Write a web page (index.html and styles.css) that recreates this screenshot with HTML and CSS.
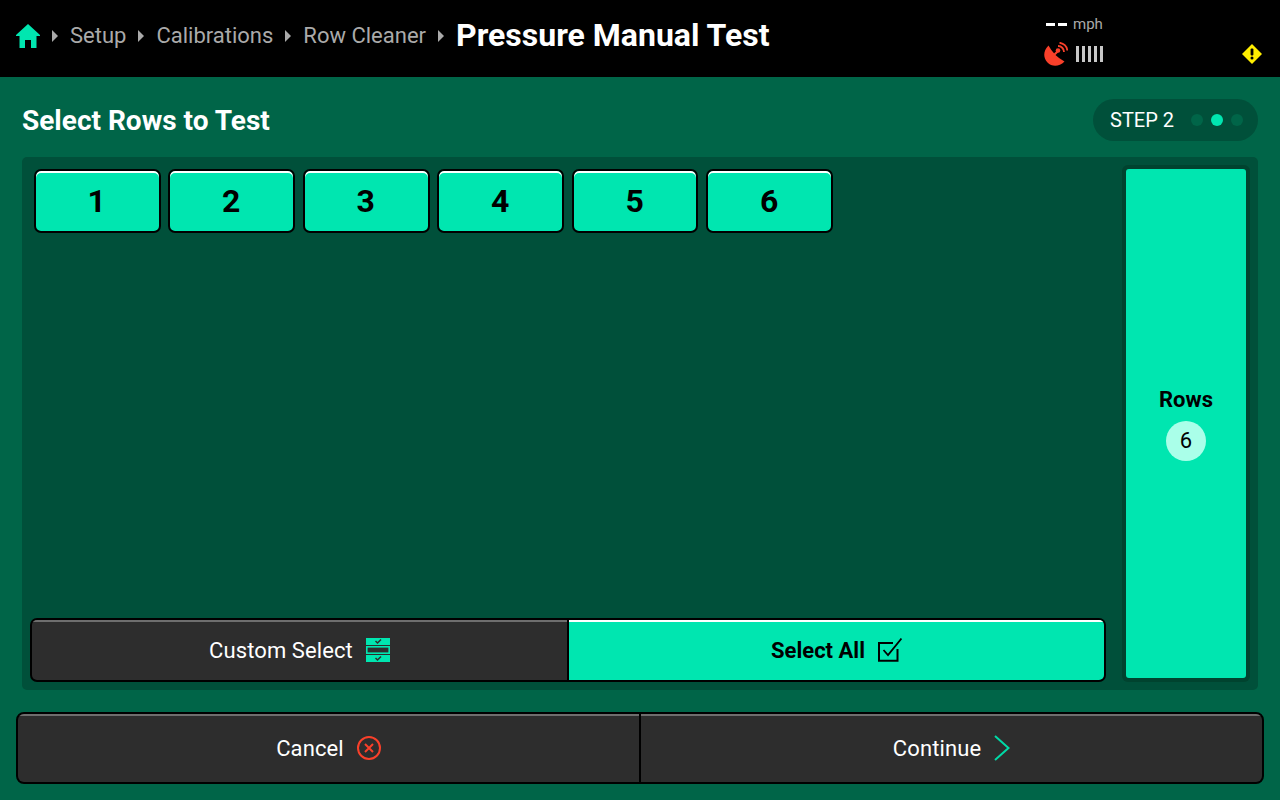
FILE: index.html
```html
<!DOCTYPE html>
<html lang="en">
<head>
<meta charset="utf-8">
<title>Pressure Manual Test</title>
<link rel="stylesheet" href="styles.css">
</head>
<body>
<header class="topbar">
  <nav class="crumbs">
    <svg class="home" viewBox="0 0 24 24" width="24" height="24"><path d="M12 0 L24 11 V12 H20.500 V24 H15 V16 H9 V24 H3.500 V12 H0 V11 Z"/></svg>
    <span class="tri"></span><span class="crumb">Setup</span>
    <span class="tri"></span><span class="crumb">Calibrations</span>
    <span class="tri"></span><span class="crumb">Row Cleaner</span>
    <span class="tri"></span><span class="page-title">Pressure Manual Test</span>
  </nav>
  <div class="status">
    <div class="speed"><span class="dash"></span><span class="dash"></span><span class="unit">mph</span></div>
    <div class="signal">
      <svg viewBox="0 0 24 24" width="24" height="24" class="dish">
        <path d="M4.500 3.500 C-1 9 -1 16 3.500 20.500 C8 25 15 25 20.500 19.500 Q10 14 4.500 3.500 Z" fill="#f9402a"/>
        <path d="M8 15 L14 9" stroke="#f9402a" stroke-width="2.200"/>
        <circle cx="14" cy="8.500" r="2.300" fill="#f9402a"/>
        <path d="M14 4 A6 6 0 0 1 20 10 M15.500 0.800 A8.500 8.500 0 0 1 23.300 8.500" fill="none" stroke="#f9402a" stroke-width="1.800"/>
      </svg>
      <div class="bars"><i></i><i></i><i></i><i></i><i></i></div>
    </div>
  </div>
  <svg class="warn" viewBox="0 0 20 20" width="20" height="20">
    <path d="M10 0 L20 10 L10 20 L0 10 Z" fill="#ffee00"/>
    <rect x="8.600" y="4.500" width="2.800" height="7" rx="1" fill="#000"/>
    <circle cx="10" cy="14" r="1.500" fill="#000"/>
  </svg>
</header>

<main class="content">
  <div class="title-row">
    <h1 class="heading">Select Rows to Test</h1>
    <div class="step">
      <span class="step-label">STEP 2</span>
      <span class="dots"><i class="dot"></i><i class="dot on"></i><i class="dot"></i></span>
    </div>
  </div>

  <section class="panel">
    <div class="left">
      <div class="rows">
        <button class="row-btn">1</button>
        <button class="row-btn">2</button>
        <button class="row-btn">3</button>
        <button class="row-btn">4</button>
        <button class="row-btn">5</button>
        <button class="row-btn">6</button>
      </div>
      <div class="segment">
        <div class="seg seg-dark">
          <span>Custom Select</span>
          <svg viewBox="0 0 24 24" width="24" height="24">
            <rect x="0" y="0" width="24" height="7" fill="#00e6b0"/>
            <path d="M9.500 3 L11.500 5 L15 1.500" fill="none" stroke="#2d2d2d" stroke-width="1.500"/>
            <rect x="0.800" y="8.800" width="22.400" height="6.400" fill="none" stroke="#00e6b0" stroke-width="1.600"/>
            <rect x="0" y="17" width="24" height="7" fill="#00e6b0"/>
            <path d="M9.500 20 L11.500 22 L15 18.500" fill="none" stroke="#2d2d2d" stroke-width="1.500"/>
          </svg>
        </div>
        <div class="seg seg-on">
          <span>Select All</span>
          <svg viewBox="0 0 24 24" width="24" height="24">
            <path d="M19.500 11 V22.700 H1 V5 H15" fill="none" stroke="#000" stroke-width="2"/>
            <path d="M5.500 12 L10 17 L23.500 0.500" fill="none" stroke="#000" stroke-width="1.800"/>
          </svg>
        </div>
      </div>
    </div>
    <aside class="side">
      <div class="side-inner">
        <span class="side-label">Rows</span>
        <span class="count">6</span>
      </div>
    </aside>
  </section>

  <footer class="actions">
    <div class="action">
      <span>Cancel</span>
      <svg viewBox="0 0 24 24" width="24" height="24">
        <circle cx="12" cy="12" r="11" fill="none" stroke="#f9402a" stroke-width="2"/>
        <path d="M8 8 L16 16 M16 8 L8 16" stroke="#f9402a" stroke-width="2"/>
      </svg>
    </div>
    <div class="action">
      <span>Continue</span>
      <svg viewBox="0 0 16 26" width="16" height="26">
        <path d="M1 1 L14.500 13 L1 25" fill="none" stroke="#00d9a6" stroke-width="2"/>
      </svg>
    </div>
  </footer>
</main>
</body>
</html>
```

FILE: styles.css
```css
* { box-sizing: border-box; }

html, body {
  margin: 0;
  width: 1280px;
  height: 800px;
  overflow: hidden;
}

body {
  font-family: Roboto, "Liberation Sans", sans-serif;
  background: #006548;
  color: #fff;
}

.topbar {
  position: relative;
  height: 77px;
  background: #000;
  display: flex;
  align-items: flex-start;
  padding-left: 16px;
}

.crumbs {
  display: flex;
  align-items: center;
  height: 71px;
}

.home { fill: #00e6b0; margin-right: 12px; }

.tri {
  width: 0;
  height: 0;
  border-left: 6px solid #aaa;
  border-top: 6px solid transparent;
  border-bottom: 6px solid transparent;
  margin-right: 12px;
}

.crumb {
  font-size: 22px;
  color: #aaa;
  margin-right: 12px;
}

.page-title {
  font-size: 32px;
  font-weight: 700;
  color: #fff;
  margin-top: -2px;
}

.status {
  position: absolute;
  left: 1044px;
  top: 14px;
}

.speed {
  display: flex;
  align-items: center;
  height: 20px;
  padding-left: 2px;
}

.dash {
  width: 9px;
  height: 3px;
  background: #fff;
  margin-right: 3px;
}

.unit {
  font-size: 15px;
  color: #aaa;
  margin-left: 3px;
}

.signal {
  display: flex;
  align-items: center;
  gap: 8px;
  margin-top: 8px;
}

.dish { display: block; }

.bars { display: flex; gap: 3px; }

.bars i {
  display: block;
  width: 3px;
  height: 16px;
  background: #c8c8c8;
}

.warn {
  position: absolute;
  left: 1242px;
  top: 44px;
}

.content { display: flex; flex-direction: column; }

.title-row {
  height: 80px;
  padding: 6px 22px 0;
  display: flex;
  align-items: center;
  justify-content: space-between;
}

.heading {
  margin: 0;
  font-size: 28px;
  font-weight: 700;
}

.step {
  width: 165px;
  height: 42px;
  border-radius: 21px;
  background: #00503a;
  display: flex;
  align-items: center;
  padding-left: 17px;
}

.step-label { font-size: 20px; width: 80.7px; }

.dots { display: flex; gap: 8px; }

.dot {
  display: block;
  width: 12px;
  height: 12px;
  border-radius: 50%;
  background: #006548;
}

.dot.on { background: #00e6b0; }

.panel {
  margin: 0 22px;
  height: 533px;
  background: #00503a;
  border-radius: 5px;
  padding: 8px;
  display: flex;
  gap: 16px;
}

.left {
  flex: 1;
  display: flex;
  flex-direction: column;
  justify-content: space-between;
}

.rows {
  display: flex;
  gap: 7.9px;
  padding: 4px 0 0 3.95px;
}

.row-btn {
  width: 126.6px;
  height: 64px;
  background: #00e6b0;
  border: 2px solid #000;
  border-radius: 7px;
  box-shadow: inset 0 2px 0 #fff;
  font: 700 32px Roboto, "Liberation Sans", sans-serif;
  color: #000;
  padding: 0 1px 0 0;
}

.segment {
  display: flex;
  height: 64px;
  border: 2px solid #000;
  border-radius: 7px;
  overflow: hidden;
  background: #000;
  gap: 2px;
}

.seg {
  flex: 1;
  display: flex;
  align-items: center;
  justify-content: center;
  gap: 13px;
  font-size: 22px;
  font-weight: 450;
}

.seg-dark {
  background: #2d2d2d;
  color: #fff;
  letter-spacing: 0.1px;
  box-shadow: inset 0 2px 0 #6e6e6e;
}

.seg-on {
  background: #00e6b0;
  color: #000;
  font-weight: 700;
  box-shadow: inset 0 2px 0 #fff;
}

.side {
  width: 128px;
  background: #00432f;
  border-radius: 6px;
  padding: 4px;
}

.side-inner {
  height: 100%;
  background: #00e6b0;
  border-radius: 3px;
  display: flex;
  flex-direction: column;
  align-items: center;
  justify-content: center;
  color: #000;
}

.side-label {
  font-size: 22px;
  font-weight: 700;
  margin-bottom: 9px;
}

.count {
  width: 40px;
  height: 40px;
  border-radius: 50%;
  background: #aaffe9;
  display: flex;
  align-items: center;
  justify-content: center;
  font-size: 22px;
}

.actions {
  margin: 22px 16px 0;
  height: 72px;
  display: flex;
  gap: 2px;
  border: 2px solid #000;
  border-radius: 8px;
  background: #000;
  overflow: hidden;
}

.action {
  flex: 1;
  display: flex;
  align-items: center;
  justify-content: center;
  gap: 13px;
  font-size: 22px;
  font-weight: 450;
  letter-spacing: 0.1px;
  background: #2d2d2d;
  box-shadow: inset 0 2px 0 #6e6e6e;
}
```
